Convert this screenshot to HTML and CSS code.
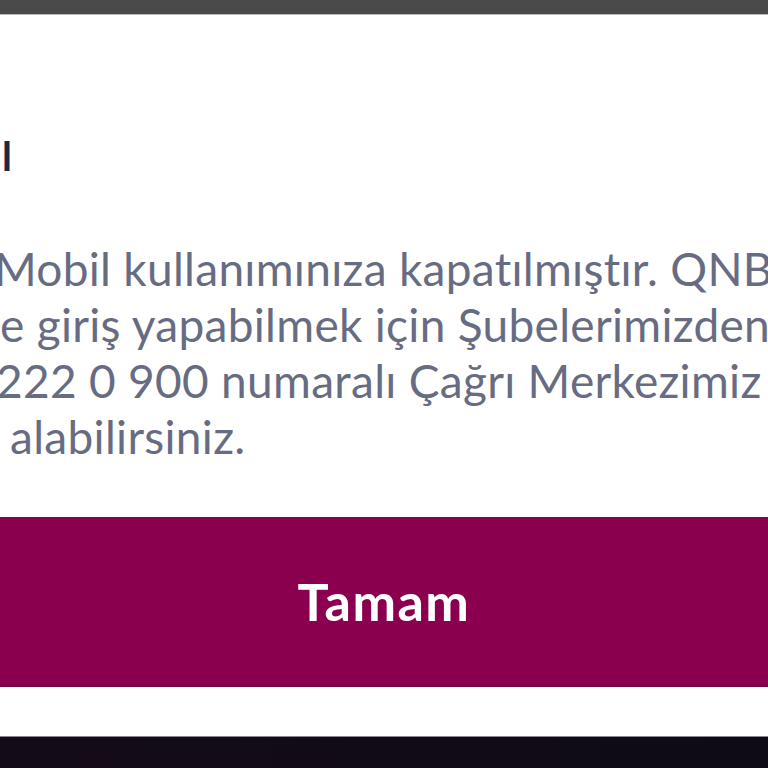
FILE: index.html
```html
<!DOCTYPE html>
<html lang="tr">
<head>
<meta charset="utf-8">
<link rel="stylesheet" href="styles.css">
</head>
<body>
<div class="screen">
  <div class="topbar"></div>
  <div class="modal">
    <div class="title">l</div>
    <div class="message">
      <div class="line l1">Mobil kullanımınıza kapatılmıştır. QNB</div>
      <div class="line l2">e giriş yapabilmek için Şubelerimizden</div>
      <div class="line l3">222 0 900 numaralı Çağrı Merkezimiz</div>
      <div class="line l4">alabilirsiniz.</div>
    </div>
    <button class="ok">Tamam</button>
  </div>
  <div class="bottom"></div>
</div>
</body>
</html>
```
FILE: styles.css
```css
html, body {
  margin: 0;
  padding: 0;
  width: 768px;
  height: 768px;
  overflow: hidden;
  background: #ffffff;
}
.screen {
  display: flex;
  flex-direction: column;
  width: 768px;
  height: 768px;
  overflow: hidden;
}
.topbar {
  height: 14px;
  background: #4a4a4a;
  border-bottom: 1px solid #b9b9b9;
  flex: none;
}
.modal {
  flex: 1;
  background: #ffffff;
  display: flex;
  flex-direction: column;
  overflow: hidden;
}
.title {
  font-family: "Lato", "Liberation Sans", sans-serif;
  font-weight: 700;
  font-size: 40px;
  line-height: 40px;
  color: #1e2645;
  margin-top: 121px;
  margin-left: 2px;
  height: 40px;
}
.message {
  margin-top: 65px;
  font-family: "Lato", "Liberation Sans", sans-serif;
  font-size: 46px;
  line-height: 56px;
  letter-spacing: 0.3px;
  color: #676c83;
  white-space: nowrap;
}
.line { height: 56px; }
.l1 { margin-left: -6px; }
.l2 { margin-left: 0; }
.l3 { margin-left: -4px; }
.l4 { margin-left: 10px; }
.ok {
  margin-top: 52px;
  height: 170px;
  width: 100%;
  flex: none;
  border: none;
  border-bottom: 2px solid #6a0d42;
  background: #8a004f;
  color: #ffffff;
  font-family: "Lato", "Liberation Sans", sans-serif;
  font-weight: 700;
  font-size: 52px;
  letter-spacing: 1.5px;
  padding: 0;
}
.bottom {
  height: 31px;
  flex: none;
  border-top: 1px solid #8a8690;
  background: linear-gradient(90deg, #150b18, #0e0b16);
}
```
